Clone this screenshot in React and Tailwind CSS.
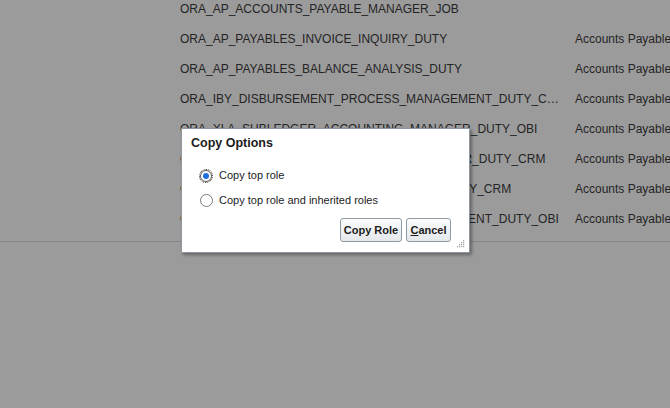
import React from "react";

const rows = [
  { name: "ORA_AP_ACCOUNTS_PAYABLE_MANAGER_JOB", desc: "" },
  { name: "ORA_AP_PAYABLES_INVOICE_INQUIRY_DUTY", desc: "Accounts Payable Invoice Inquiry" },
  { name: "ORA_AP_PAYABLES_BALANCE_ANALYSIS_DUTY", desc: "Accounts Payable Balance Analysis" },
  { name: "ORA_IBY_DISBURSEMENT_PROCESS_MANAGEMENT_DUTY_CRM", desc: "Accounts Payable Disbursement" },
  { name: "ORA_XLA_SUBLEDGER_ACCOUNTING_MANAGER_DUTY_OBI", desc: "Accounts Payable Subledger" },
  { name: "ORA_AP_ACCOUNTS_PAYABLE_SPECIALIST_MGR_DUTY_CRM", desc: "Accounts Payable Specialist" },
  { name: "ORA_AP_PAYABLES_WORKBENCH_INQUIRY_DUTY_CRM", desc: "Accounts Payable Inquiry" },
  { name: "ORA_IBY_DISBURSEMENT_PROCESS_MANAGEMENT_DUTY_OBI", desc: "Accounts Payable Disbursement" },
];

function Radio({ checked }) {
  if (checked) {
    return (
      <span className="w-[14px] h-[14px] rounded-full border border-dotted border-[#333] flex items-center justify-center shrink-0">
        <span className="w-[12px] h-[12px] rounded-full border border-[#5a5a5a] bg-white flex items-center justify-center">
          <span className="w-[6px] h-[6px] rounded-full bg-[#1d6fe0]" />
        </span>
      </span>
    );
  }
  return (
    <span className="w-[14px] h-[14px] flex items-center justify-center shrink-0">
      <span className="w-[13px] h-[13px] rounded-full border border-[#7a7a7a] bg-white" />
    </span>
  );
}

export default function App() {
  return (
    <div
      className="relative w-[670px] h-[408px] overflow-hidden bg-[#9b9b9b] text-[#242424]"
      style={{ fontFamily: '"Liberation Sans", Arial, sans-serif' }}
    >
      {/* TABLE BEHIND OVERLAY */}
      <div className="-mt-[6px] text-[12px]">
        {rows.map((r) => (
          <div key={r.name} className="flex items-center h-[30px] whitespace-nowrap">
            <div className="w-[180px] shrink-0" />
            <div className="w-[381px] shrink-0 truncate">{r.name}</div>
            <div className="pl-[14px]">{r.desc}</div>
          </div>
        ))}
      </div>
      <div className="mt-[7px] h-px bg-[#868686]" />

      {/* COPY OPTIONS DIALOG */}
      <div className="absolute left-[181px] top-[128px] w-[289px] h-[125px] bg-white border border-[#8e979f] shadow-[2px_2px_3px_rgba(0,0,0,0.35)] text-[#1c1c1c]">
        <div className="pt-[6px] pl-[9px] text-[12.5px] font-bold leading-[16px]">Copy Options</div>

        <div className="mt-[12px] pl-[17px] text-[11px]">
          <div className="flex items-center h-[25px] gap-[6px]">
            <Radio checked />
            <span>Copy top role</span>
          </div>
          <div className="flex items-center h-[25px] gap-[6px]">
            <Radio />
            <span>Copy top role and inherited roles</span>
          </div>
        </div>

        <div className="mt-[5px] pr-[18px] flex justify-end gap-[4px] text-[11px] font-bold">
          <button className="h-[24px] w-[62px] rounded-[3px] border border-[#8e9aa6] bg-gradient-to-b from-[#fbfcfc] to-[#e4e8eb] text-[#1c1c1c]">
            Copy Role
          </button>
          <button className="h-[24px] w-[45px] rounded-[3px] border border-[#8e9aa6] bg-gradient-to-b from-[#fbfcfc] to-[#e4e8eb] text-[#1c1c1c]">
            <span className="underline">C</span>ancel
          </button>
        </div>

        {/* resize grip */}
        <svg className="absolute right-[4px] bottom-[4px]" width="8" height="8" viewBox="0 0 8 8">
          {[
            [6, 0], [6, 2], [4, 2], [6, 4], [4, 4], [2, 4], [6, 6], [4, 6], [2, 6], [0, 6],
          ].map(([x, y]) => (
            <rect key={x + "-" + y} x={x} y={y} width="1.2" height="1.2" fill="#a0a0a0" />
          ))}
        </svg>
      </div>
    </div>
  );
}
